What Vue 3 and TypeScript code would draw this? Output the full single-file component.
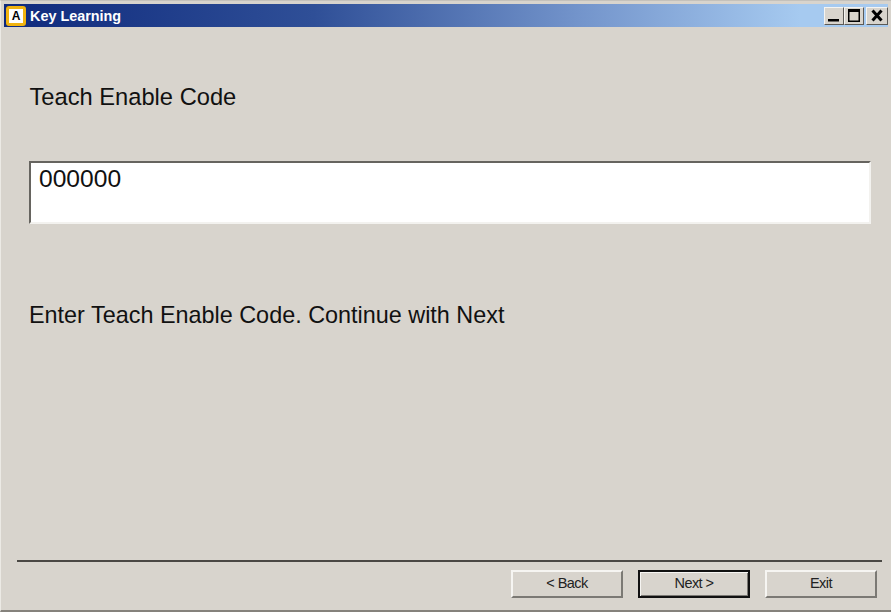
<script setup lang="ts">
const title: string = 'Key Learning'
const buttons: { label: string; primary: boolean }[] = [
  { label: '< Back', primary: false },
  { label: 'Next >', primary: true },
  { label: 'Exit', primary: false },
]
</script>

<template>
  <div class="window">
    <header class="titlebar">
      <div class="app-icon"><span>A</span></div>
      <span class="title">{{ title }}</span>
      <div class="controls">
        <button class="ctl" aria-label="Minimize">
          <svg width="18" height="15" viewBox="0 0 18 15"><rect x="3" y="11" width="11" height="2.5" fill="#000" /></svg>
        </button>
        <button class="ctl" aria-label="Maximize">
          <svg width="18" height="15" viewBox="0 0 18 15"><path d="M3 1h12v13H3z M4.5 4v8.5h9V4z" fill="#000" fill-rule="evenodd" /></svg>
        </button>
        <button class="ctl close" aria-label="Close">
          <svg width="18" height="15" viewBox="0 0 18 15"><path d="M4.5 2.5l9 10M13.5 2.5l-9 10" stroke="#000" stroke-width="3" fill="none" /></svg>
        </button>
      </div>
    </header>
    <main class="body">
      <div class="heading">Teach Enable Code</div>
      <div class="field">000000</div>
      <div class="hint">Enter Teach Enable Code. Continue with Next</div>
    </main>
    <footer class="footer">
      <div class="rule"></div>
      <div class="actions">
        <button v-for="b in buttons" :key="b.label" class="btn" :class="{ primary: b.primary }">{{ b.label }}</button>
      </div>
    </footer>
  </div>
</template>

<style>
html, body { margin: 0; padding: 0; background: #d8d4cd; }
</style>

<style scoped>
.window {
  box-sizing: border-box;
  width: 891px;
  height: 612px;
  padding: 3px 3px 2px 2px;
  background: #d8d4cd;
  border-top: 1px solid #c4c1bb;
  border-left: 1px solid #eceae5;
  border-bottom: 2px solid #85827c;
  display: flex;
  flex-direction: column;
  font-family: "Liberation Sans", Arial, sans-serif;
  color: #111;
  overflow: hidden;
}
.titlebar {
  flex: none;
  height: 23px;
  margin-left: 1px;
  display: flex;
  align-items: center;
  padding: 0 0 0 2px;
  background: linear-gradient(90deg, #0f2a7d 0%, #2f4f97 35%, #7394cb 65%, #a6caf0 90%, #a6caf0 100%);
}
.app-icon {
  box-sizing: border-box;
  width: 20px;
  height: 20px;
  border: 3px solid #f0b310;
  border-radius: 3px;
  background: #fff;
  display: flex;
  align-items: center;
  justify-content: center;
}
.app-icon span { font-size: 12px; font-weight: 700; color: #000; line-height: 1; }
.title {
  margin-left: 4px;
  font-size: 14.4px;
  font-weight: 700;
  color: #fff;
}
.controls { margin-left: auto; display: flex; align-items: center; }
.ctl {
  box-sizing: border-box;
  width: 20px;
  height: 18px;
  padding: 0;
  background: #d8d4cd;
  border: 1px solid;
  border-color: #f5f4f1 #5c5a56 #5c5a56 #f5f4f1;
  display: flex;
  align-items: center;
  justify-content: center;
}
.close { margin-left: 2px; width: 22px; }
.body {
  flex: 1;
  display: flex;
  flex-direction: column;
  padding-left: 26px;
  padding-right: 17px;
}
.heading {
  margin-top: 57px;
  padding-left: 0.5px;
  font-size: 23.7px;
  line-height: 26px;
}
.field {
  box-sizing: border-box;
  margin-top: 51px;
  height: 63px;
  padding: 2px 0 0 8px;
  background: #fff;
  border: 2px solid;
  border-color: #66645f #f3f2ef #f3f2ef #66645f;
  font-size: 24.6px;
  line-height: 27px;
}
.hint {
  margin-top: 78px;
  font-size: 23.4px;
  line-height: 26px;
}
.footer { flex: none; padding: 0 6px 0 14px; }
.rule { height: 2px; background: #4a4844; }
.actions {
  display: flex;
  justify-content: flex-end;
  gap: 15px;
  padding: 8px 5px 10px 0;
}
.btn {
  box-sizing: border-box;
  width: 112px;
  height: 28px;
  padding: 0 0 2px;
  background: #d8d4cd;
  border: 2px solid;
  border-color: #f6f5f2 #7b7974 #7b7974 #f6f5f2;
  font-family: "Liberation Sans", Arial, sans-serif;
  font-size: 14.5px;
  letter-spacing: -0.55px;
  color: #222;
}
.btn.primary {
  border-color: #111;
  box-shadow: inset 1px 1px 0 #f6f5f2, inset -1px -1px 0 #7b7974;
}
</style>
